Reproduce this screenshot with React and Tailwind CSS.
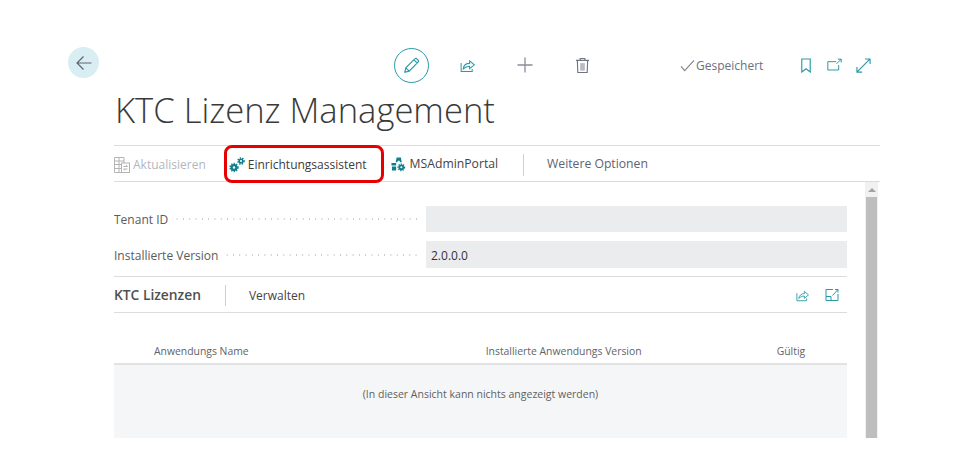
const font = { fontFamily: '"Open Sans", "Noto Sans", sans-serif' };

function ShareIcon({ className }) {
    return (
        <svg viewBox="0 0 20 20" className={className} fill="none" stroke="#2a9aa5" strokeWidth="1.2">
            <path d="M2.500 7v10h13v-3" />
            <path d="M5 14c.5-4 3.500-6.500 7.500-6.500V4.500l5.500 4.700-5.500 4.600v-3c-3 0-5.500 1-7.500 3.200z" />
        </svg>
    );
}

function Gear({ cx, cy, r, hole }) {
    return (
        <g>
            <circle cx={cx} cy={cy} r={r} fill="#0f7f8c" />
            <circle cx={cx} cy={cy} r={r + 0.4} fill="none" stroke="#0f7f8c" strokeWidth="1.600" strokeDasharray="1.300 1.200" />
            <circle cx={cx} cy={cy} r={hole} fill="#fff" />
        </g>
    );
}

function Gears({ className }) {
    return (
        <svg viewBox="0 0 16 16" className={className}>
            <Gear cx={5} cy={10.500} r={3.500} hole={1.200} />
            <Gear cx={12} cy={4} r={2.600} hole={1} />
        </svg>
    );
}

function PortalIcon({ className }) {
    return (
        <svg viewBox="0 0 16 16" className={className} fill="#0f7f8c">
            <path d="M6 .500h4.500l1 5h-2l-.3-1.500H7.200L6.800 5.500H5z" />
            <path d="M.500 6.500h5V9h-5zM1 10h4.500v4.500H1z" />
            <Gear cx={11} cy={11} r={3} hole={1.100} />
        </svg>
    );
}

function RefreshIcon({ className }) {
    return (
        <svg viewBox="0 0 16 16" className={className} fill="none" stroke="#b4b4b4" strokeWidth="1">
            <path d="M.5 .5h9.500v15H.5zM.5 4h9.500M.5 7.500h9.500M.5 11.500h9.500M5 .5v15" />
            <rect x="7.500" y="6" width="8" height="9.500" fill="#fff" />
            <path d="M9.500 9.500h4L12 8M13.500 12h-4l1.500 1.500" />
        </svg>
    );
}

function Field({ label, value, dots, tall }) {
    return (
        <div className="flex items-center">
            <span className="pt-[2px] text-[12px] text-[#5b5b5b] whitespace-nowrap">{label}</span>
            <span
                className="ml-[6px] h-[2px] bg-[radial-gradient(circle,#c8c8c8_1px,transparent_1px)] bg-[length:6.300px_2px]"
                style={{ width: dots }}
            />
            <div className={`ml-auto w-[421px] bg-[#ebecee] flex items-center pl-[5px] pt-[2px] text-[12px] text-[#333] ${tall ? 'h-[27px]' : 'h-[26px]'}`}>
                {value}
            </div>
        </div>
    );
}

export default function App() {
    return (
        <div className="relative w-[974px] h-[460px] overflow-hidden bg-white flex" style={font}>
            <div className="w-[114px] shrink-0 pl-[68px] pt-[47px]">
                <div className="w-[31px] h-[31px] rounded-full bg-[#d8eef2] flex items-center justify-center">
                    <svg viewBox="0 0 18 18" className="w-[18px] h-[18px]" fill="none" stroke="#5e6470" strokeWidth="1.200">
                        <path d="M16.500 9H2M8.500 2.500L2 9l6.500 6.500" />
                    </svg>
                </div>
            </div>

            <div className="w-[766px] shrink-0">
                <div className="pt-[47px] h-[83px] flex items-start">
                    <div className="flex items-center h-[36px] w-full">
                        <div className="ml-[280px] w-[35px] h-[35px] rounded-full border border-[#2a9aa5] flex items-center justify-center">
                            <svg viewBox="0 0 20 20" className="w-[19px] h-[19px]" fill="none" stroke="#2a9aa5" strokeWidth="1.200">
                                <path d="M3 17l1-4.500L13.500 3a1.500 1.500 0 0 1 2.200 0l1.200 1.200a1.500 1.500 0 0 1 0 2.200L7.500 16zM4 12.500L7.500 16M12.500 4l3.500 3.500" />
                            </svg>
                        </div>
                        <ShareIcon className="ml-[30px] w-[17px] h-[17px]" />
                        <svg viewBox="0 0 18 18" className="ml-[40px] w-[18px] h-[18px]" fill="none" stroke="#8b8f98" strokeWidth="1.300">
                            <path d="M9 1.500v15M1.500 9h15" />
                        </svg>
                        <svg viewBox="0 0 16 18" className="ml-[41px] w-[15px] h-[17px]" fill="none" stroke="#6f7480" strokeWidth="1.200">
                            <path d="M1 3.500h14M5.500 3.500V1.500h5v2M2.500 3.500l.5 13h10l.5-13" />
                            <path d="M5.500 6.500h5v8h-5z" fill="#b9bcc2" stroke="none" />
                        </svg>
                        <svg viewBox="0 0 16 14" className="ml-[90px] w-[15px] h-[13px]" fill="none" stroke="#7e838d" strokeWidth="1.200">
                            <path d="M1 8l4 4.500L15 1.500" />
                        </svg>
                        <span className="ml-[1px] pt-[1px] text-[12px] text-[#6b7080]">Gespeichert</span>
                        <svg viewBox="0 0 12 16" className="ml-[37px] w-[12px] h-[15px]" fill="none" stroke="#2a9aa5" strokeWidth="1.200">
                            <path d="M1.500 1h9v14L6 11.500 1.500 15z" />
                        </svg>
                        <svg viewBox="0 0 18 16" className="ml-[15px] w-[15px] h-[14px]" fill="none" stroke="#2a9aa5" strokeWidth="1.200">
                            <path d="M11 4H1v10h13V8M11.500 6.500L17 1M13 1h4v4" />
                        </svg>
                        <svg viewBox="0 0 16 16" className="ml-[14px] w-[15px] h-[15px]" fill="none" stroke="#2a9aa5" strokeWidth="1.200">
                            <path d="M1 15L15 1M9.500 1H15v5.500M1 9.500V15h5.500" />
                        </svg>
                    </div>
                </div>

                <h1 className="h-[62px] pl-[1px] text-[34.600px] leading-[54px] font-light text-[#3a3a3a] whitespace-nowrap">KTC Lizenz Management</h1>

                <div className="h-[37px] border-y border-[#dcdcdc] flex items-center pt-[2px] text-[12.200px]">
                    <RefreshIcon className="w-[16px] h-[16px]" />
                    <span className="ml-[3px] text-[12px] text-[#b4b6bb]">Aktualisieren</span>
                    <Gears className="ml-[23px] w-[16px] h-[16px]" />
                    <span className="ml-[3px] text-[12px] text-[#3c3c3c]">Einrichtungsassistent</span>
                    <PortalIcon className="ml-[24px] w-[15px] h-[15px]" />
                    <span className="ml-[4px] text-[#444]">MSAdminPortal</span>
                    <div className="ml-[25px] w-px h-[22px] bg-[#d0d0d0]" />
                    <span className="ml-[23px] text-[#5d6371]">Weitere Optionen</span>
                </div>

                <div className="flex h-[256px] overflow-hidden">
                    <div className="w-[733px] shrink-0">
                        <div className="pt-[24px] flex flex-col gap-[9px]">
                            <Field label="Tenant ID" value="" dots={245} />
                            <Field label="Installierte Version" value="2.0.0.0" dots={196} tall />
                        </div>

                        <div className="mt-[8px] h-[37px] border-y border-[#dcdcdc] flex items-center pt-[1px]">
                            <span className="text-[13.800px] font-semibold text-[#505050]">KTC Lizenzen</span>
                            <div className="ml-[24px] w-px h-[21px] bg-[#cfcfcf]" />
                            <span className="ml-[23px] pt-[1px] text-[12px] text-[#444]">Verwalten</span>
                            <ShareIcon className="ml-auto w-[15px] h-[15px]" />
                            <svg viewBox="0 0 14 14" className="ml-[15px] mr-[8px] w-[14px] h-[14px]" fill="none" stroke="#2a9aa5" strokeWidth="1">
                                <path d="M8 1.500H1v11h12V6M1 8.500h5v4M7.500 7.500L13 1.500M10 1.500h3v3" />
                            </svg>
                        </div>

                        <div className="mt-[28px] h-[24px] border-b-2 border-[#e2e2e2] flex items-center text-[10.400px] text-[#5f6368]">
                            <span className="ml-[40px]">Anwendungs Name</span>
                            <span className="ml-[237px]">Installierte Anwendungs Version</span>
                            <span className="ml-[135px]">Gültig</span>
                        </div>
                        <div className="h-[73px] bg-[#f5f6f8] pt-[22px] text-center text-[10.500px] text-[#5f5f5f]">
                            (In dieser Ansicht kann nichts angezeigt werden)
                        </div>
                    </div>

                    <div className="ml-[18px] w-[13px] shrink-0 flex flex-col bg-[#f1f1f1]">
                        <div className="h-[15px] flex items-center justify-center">
                            <div className="w-0 h-0 border-x-[4px] border-x-transparent border-b-[4px] border-b-[#a3a3a3]" />
                        </div>
                        <div className="flex-1 mx-[1px] bg-[#bebebe]" />
                    </div>
                </div>
            </div>

            <div className="absolute left-[224px] top-[145px] w-[160px] h-[38px] border-[3px] border-[#e60000] rounded-[8px]" />
        </div>
    );
}
